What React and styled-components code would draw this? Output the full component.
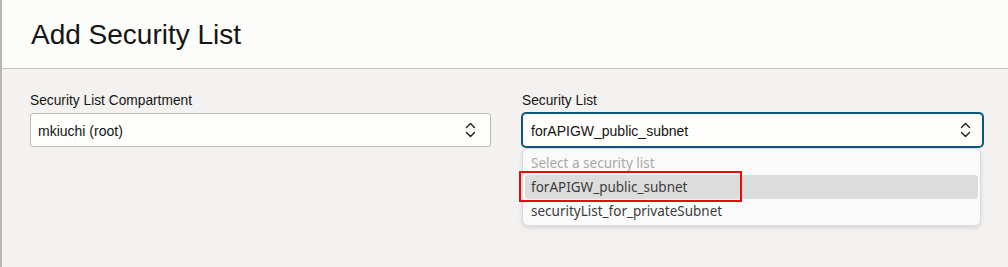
import React from "react";
import styled, { createGlobalStyle } from "styled-components";

const Global = createGlobalStyle`
  html, body { margin: 0; padding: 0; }
  body {
    width: 1008px;
    height: 267px;
    overflow: hidden;
    background: #f3f2f1;
    font-family: "Liberation Sans", Arial, sans-serif;
    color: #161513;
  }
`;

const Page = styled.div`
  display: flex;
  width: 1008px;
  height: 267px;
`;

const EdgeStrip = styled.div`
  width: 2px;
  flex: none;
  background: #b8b7b6;
`;

const Panel = styled.div`
  flex: 1;
  display: flex;
  flex-direction: column;
  background: #f3f2f1;
`;

const Header = styled.header`
  height: 69px;
  box-sizing: border-box;
  padding: 19px 0 0 29px;
  background: #fcfcfb;
  border-bottom: 1px solid #c4c3c2;
`;

const Title = styled.h1`
  margin: 0;
  font-size: 28px;
  font-weight: 400;
  line-height: 32px;
  color: #161513;
`;

const Body = styled.div`
  display: grid;
  grid-template-columns: 461px 461px;
  column-gap: 31px;
  padding: 24px 0 0 28px;
`;

const Field = styled.div`
  position: relative;
  display: flex;
  flex-direction: column;
  gap: 4px;
`;

const Label = styled.label`
  font-size: 13.75px;
  line-height: 16px;
  color: #161513;
`;

const SelectBox = styled.div`
  position: relative;
  display: flex;
  align-items: center;
  height: 34px;
  box-sizing: border-box;
  padding: 0 0 0 ${(p) => (p.$focused ? 8 : 7)}px;
  background: #fdfdfc;
  border: 1px solid ${(p) => (p.$focused ? "#0b5878" : "#bcbbba")};
  border-radius: ${(p) => (p.$focused ? 4 : 3)}px;
  box-shadow: ${(p) => (p.$focused ? "0 0 0 1px #0b5878" : "none")};
  font-size: 14px;
  color: #161513;
`;

const ValueText = styled.span`
  flex: 1;
  line-height: 16px;
  margin-top: 2px;
`;

const Chevrons = styled.svg`
  width: 11px;
  height: 16px;
  margin-right: ${(p) => (p.$focused ? 11 : 14)}px;
  flex: none;
`;

const Dropdown = styled.ul`
  position: absolute;
  left: 0;
  top: 55px;
  width: 459px;
  box-sizing: border-box;
  margin: 0;
  padding: 2px;
  list-style: none;
  background: #fafafa;
  border: 1px solid #d9d9d9;
  border-radius: 6px;
  box-shadow: 0 2px 4px rgba(0, 0, 0, 0.12);
  font-family: "Noto Sans", "Open Sans", sans-serif;
  font-size: 13.5px;
  z-index: 2;
`;

const Option = styled.li`
  height: 24px;
  line-height: 24px;
  padding: 0 6px;
  border-radius: 4px;
  color: ${(p) => (p.$placeholder ? "#a9a9a9" : "#3d3d3d")};
  background: ${(p) => (p.$active ? "#dcdcdc" : "transparent")};
  white-space: nowrap;
`;

const Highlight = styled.div`
  position: absolute;
  left: -3px;
  top: 78px;
  width: 219px;
  height: 27px;
  border: 2px solid #ea0a0a;
  pointer-events: none;
  z-index: 3;
`;

function ChevronIcon({ focused }) {
  return (
    <Chevrons $focused={focused} viewBox="0 0 11 16" fill="none">
      <path d="M1.5 5.5 L5.5 1.5 L9.5 5.5" stroke="#1f1e1d" strokeWidth="1.4" strokeLinecap="round" strokeLinejoin="round" />
      <path d="M1.5 10.5 L5.5 14.5 L9.5 10.5" stroke="#1f1e1d" strokeWidth="1.4" strokeLinecap="round" strokeLinejoin="round" />
    </Chevrons>
  );
}

export default function App() {
  return (
    <>
      <Global />
      <Page>
        <EdgeStrip />
        <Panel>
          <Header>
            <Title>Add Security List</Title>
          </Header>
          <Body>
            <Field>
              <Label>Security List Compartment</Label>
              <SelectBox>
                <ValueText>mkiuchi (root)</ValueText>
                <ChevronIcon />
              </SelectBox>
            </Field>
            <Field>
              <Label>Security List</Label>
              <SelectBox $focused>
                <ValueText>forAPIGW_public_subnet</ValueText>
                <ChevronIcon focused />
              </SelectBox>
              <Dropdown>
                <Option $placeholder>Select a security list</Option>
                <Option $active>forAPIGW_public_subnet</Option>
                <Option>securityList_for_privateSubnet</Option>
              </Dropdown>
              <Highlight />
            </Field>
          </Body>
        </Panel>
      </Page>
    </>
  );
}
